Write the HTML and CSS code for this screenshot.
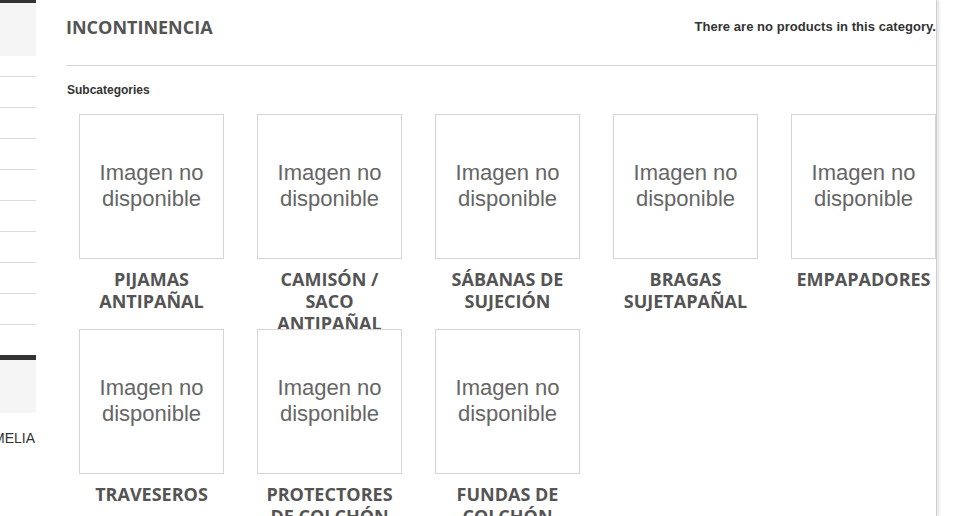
FILE: index.html
```html
<!DOCTYPE html>
<html lang="es">
<head>
<meta charset="utf-8">
<title>Incontinencia</title>
<link rel="stylesheet" href="styles.css">
</head>
<body>
<div class="page">
  <aside class="sidebar">
    <div class="block-head"></div>
    <ul class="side-list">
      <li></li><li></li><li></li><li></li><li></li><li></li><li></li><li></li><li></li>
    </ul>
    <div class="block-head block-head--thick"></div>
    <div class="side-text">CAMELIA</div>
  </aside>
  <main class="main">
    <div class="heading">
      <h1 class="title">INCONTINENCIA</h1>
      <p class="count">There are no products in this category.</p>
    </div>
    <h3 class="subhead">Subcategories</h3>
    <ul class="grid">
      <li class="item"><div class="thumb">Imagen no<br>disponible</div><h5 class="name">PIJAMAS ANTIPAÑAL</h5></li>
      <li class="item"><div class="thumb">Imagen no<br>disponible</div><h5 class="name">CAMISÓN / SACO ANTIPAÑAL</h5></li>
      <li class="item"><div class="thumb">Imagen no<br>disponible</div><h5 class="name">SÁBANAS DE SUJECIÓN</h5></li>
      <li class="item"><div class="thumb">Imagen no<br>disponible</div><h5 class="name">BRAGAS SUJETAPAÑAL</h5></li>
      <li class="item"><div class="thumb">Imagen no<br>disponible</div><h5 class="name">EMPAPADORES</h5></li>
      <li class="item"><div class="thumb">Imagen no<br>disponible</div><h5 class="name">TRAVESEROS</h5></li>
      <li class="item"><div class="thumb">Imagen no<br>disponible</div><h5 class="name">PROTECTORES DE COLCHÓN</h5></li>
      <li class="item"><div class="thumb">Imagen no<br>disponible</div><h5 class="name">FUNDAS DE COLCHÓN</h5></li>
    </ul>
  </main>
</div>
</body>
</html>
```

FILE: styles.css
```css
* { box-sizing: border-box; }
html, body { margin: 0; padding: 0; background: #fff; }
body { font-family: "Liberation Sans", Arial, sans-serif; color: #333; overflow: hidden; }

.page { display: flex; align-items: flex-start; height: 516px; }

.sidebar { width: 36px; flex: 0 0 36px; }
.block-head { border-top: 3px solid #333; background: #f5f5f5; height: 56px; }
.block-head--thick { border-top-width: 5px; height: 58px; }
.side-list { list-style: none; margin: 0; padding: 20px 0 0; }
.side-list li { height: 31px; border-top: 1px solid #dbdbdb; }
.side-text { margin-top: 17px; font-size: 14px; line-height: 16px; color: #333; white-space: nowrap; overflow: hidden; direction: rtl; text-align: left; padding-right: 1px; }

.main { margin-left: 30px; width: 871px; height: 516px; border-right: 1px solid #d0d0d0; box-shadow: 2px 0 3px rgba(0,0,0,0.12); }

.heading { display: flex; justify-content: space-between; align-items: flex-start; height: 66px; border-bottom: 1px solid #d6d4d4; }
.title { margin: 15px 0 0; font-family: "Open Sans", sans-serif; font-weight: 700; font-size: 18px; line-height: 24px; color: #555454; }
.count { margin: 19px 0 0; font-size: 13px; line-height: 16px; font-weight: 700; color: #333; letter-spacing: 0.05px; }

.subhead { margin: 16px 0 0 1px; font-size: 12px; line-height: 16px; font-weight: 700; color: #333; }

.grid { list-style: none; margin: 16px 0 0; padding: 0 0 0 13px; display: flex; flex-wrap: wrap; column-gap: 33px; }
.item { width: 145px; height: 215px; overflow: hidden; }
.thumb { width: 145px; height: 145px; border: 1px solid #d6d4d4; display: flex; align-items: center; justify-content: center; text-align: center; font-size: 22px; line-height: 26px; color: #666; background: #fff; padding-bottom: 1px; }
.name { margin: 9px 0 0; padding: 0 5px; text-align: center; font-family: "Open Sans", sans-serif; font-weight: 700; font-size: 18px; line-height: 22px; color: #555454; }
```
